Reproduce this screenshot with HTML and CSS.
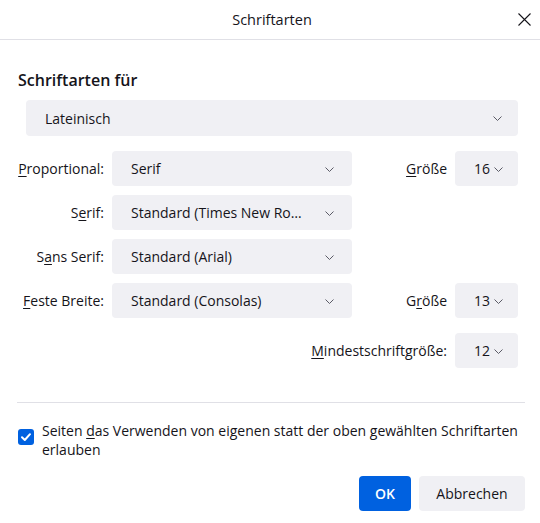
FILE: index.html
```html
<!DOCTYPE html>
<html lang="de">
<head>
<meta charset="utf-8">
<title>Schriftarten</title>
<link rel="stylesheet" href="styles.css">
</head>
<body>
<div class="dialog">
  <header class="titlebar">
    <span></span>
    <h1 class="title">Schriftarten</h1>
    <button class="close" aria-label="Schließen">
      <svg width="13" height="13" viewBox="0 0 13 13"><path d="M0.5 0.5 L12.5 12.5 M12.5 0.5 L0.5 12.5" stroke="#15141a" stroke-width="1.1" fill="none"/></svg>
    </button>
  </header>

  <main class="content">
    <h2 class="heading">Schriftarten für</h2>
    <div class="select select-wide">
      <span class="value">Lateinisch</span>
      <svg class="chev" width="9" height="5" viewBox="0 0 9 5"><path d="M0.5 0.5 L4.5 4.5 L8.5 0.5" stroke="#5b5b66" stroke-width="1" fill="none"/></svg>
    </div>

    <div class="fontgrid">
      <label class="lbl"><u>P</u>roportional:</label>
      <div class="select"><span class="value">Serif</span><svg class="chev" width="9" height="5" viewBox="0 0 9 5"><path d="M0.5 0.5 L4.5 4.5 L8.5 0.5" stroke="#5b5b66" stroke-width="1" fill="none"/></svg></div>
      <label class="lbl"><u>G</u>röße</label>
      <div class="select select-size"><span class="value">16</span><svg class="chev" width="9" height="5" viewBox="0 0 9 5"><path d="M0.5 0.5 L4.5 4.5 L8.5 0.5" stroke="#5b5b66" stroke-width="1" fill="none"/></svg></div>

      <label class="lbl">S<u>e</u>rif:</label>
      <div class="select"><span class="value">Standard (Times New Ro…</span><svg class="chev" width="9" height="5" viewBox="0 0 9 5"><path d="M0.5 0.5 L4.5 4.5 L8.5 0.5" stroke="#5b5b66" stroke-width="1" fill="none"/></svg></div>
      <span></span><span></span>

      <label class="lbl">S<u>a</u>ns Serif:</label>
      <div class="select"><span class="value">Standard (Arial)</span><svg class="chev" width="9" height="5" viewBox="0 0 9 5"><path d="M0.5 0.5 L4.5 4.5 L8.5 0.5" stroke="#5b5b66" stroke-width="1" fill="none"/></svg></div>
      <span></span><span></span>

      <label class="lbl"><u>F</u>este Breite:</label>
      <div class="select"><span class="value">Standard (Consolas)</span><svg class="chev" width="9" height="5" viewBox="0 0 9 5"><path d="M0.5 0.5 L4.5 4.5 L8.5 0.5" stroke="#5b5b66" stroke-width="1" fill="none"/></svg></div>
      <label class="lbl">G<u>r</u>öße</label>
      <div class="select select-size"><span class="value">13</span><svg class="chev" width="9" height="5" viewBox="0 0 9 5"><path d="M0.5 0.5 L4.5 4.5 L8.5 0.5" stroke="#5b5b66" stroke-width="1" fill="none"/></svg></div>
    </div>

    <div class="minrow">
      <label class="lbl"><u>M</u>indestschriftgröße:</label>
      <div class="select select-size"><span class="value">12</span><svg class="chev" width="9" height="5" viewBox="0 0 9 5"><path d="M0.5 0.5 L4.5 4.5 L8.5 0.5" stroke="#5b5b66" stroke-width="1" fill="none"/></svg></div>
    </div>
  </main>

  <footer class="footer">
    <hr class="sep">
    <div class="checkrow">
      <span class="checkbox"><svg width="16" height="16" viewBox="0 0 16 16"><path d="M4 8.3 L6.8 11 L12 5.2" stroke="#fff" stroke-width="2" fill="none" stroke-linecap="round" stroke-linejoin="round"/></svg></span>
      <span class="checktext">Seiten <u>d</u>as Verwenden von eigenen statt der oben gewählten Schriftarten erlauben</span>
    </div>
    <div class="buttons">
      <button class="btn btn-primary">OK</button>
      <button class="btn">Abbrechen</button>
    </div>
  </footer>
</div>
</body>
</html>
```

FILE: styles.css
```css
* { box-sizing: border-box; }

html, body {
  margin: 0;
  padding: 0;
  background: #ffffff;
}

body {
  font-family: "Open Sans", "Noto Sans", sans-serif;
  font-size: 14px;
  color: #15141a;
}

.dialog {
  width: 540px;
  height: 523px;
  display: flex;
  flex-direction: column;
}

.titlebar {
  height: 40px;
  border-bottom: 1px solid #e0e0e6;
  display: grid;
  grid-template-columns: 1fr auto 1fr;
  align-items: center;
}

.title {
  margin: 0;
  font-size: 14.5px;
  font-weight: 400;
  padding-left: 4px;
}

.close {
  justify-self: end;
  margin-right: 9px;
  width: 13px;
  height: 13px;
  padding: 0;
  border: 0;
  background: none;
  display: flex;
}

.content {
  padding: 28px 22px 0 18px;
}

.heading {
  margin: 0;
  font-size: 16px;
  font-weight: 600;
  line-height: 24px;
}

.select {
  height: 35px;
  background: #f0f0f4;
  border-radius: 4px;
  display: flex;
  align-items: center;
  justify-content: space-between;
  padding: 0 18px 0 19px;
  white-space: nowrap;
  overflow: hidden;
}

.select-wide {
  margin: 8px 0 0 8px;
  height: 36px;
  padding-right: 16px;
}

.select-size {
  padding: 0 15px 0 19px;
}

.chev {
  flex: none;
  margin-top: 1px;
}

.fontgrid {
  margin-top: 15px;
  display: grid;
  grid-template-columns: 86px 240px 1fr 63px;
  column-gap: 8px;
  row-gap: 9px;
  align-items: center;
}

.lbl {
  text-align: right;
  white-space: nowrap;
}

u {
  text-decoration-thickness: 1px;
  text-underline-offset: 2px;
}

.minrow {
  margin-top: 15px;
  display: flex;
  justify-content: flex-end;
  align-items: center;
  gap: 8px;
}

.minrow .select-size {
  width: 63px;
}

.footer {
  padding: 0 15px 0 17px;
}

.sep {
  margin: 34px 0 0 0;
  border: 0;
  border-top: 1px solid #e0e0e6;
  height: 0;
}

.checkrow {
  margin-top: 18px;
  display: flex;
  align-items: flex-start;
  gap: 8px;
  padding-left: 1px;
}

.checkbox {
  flex: none;
  width: 16px;
  height: 16px;
  margin-top: 8px;
  background: #0061e0;
  border-radius: 3px;
  display: flex;
}

.checktext {
  line-height: 19px;
}

.buttons {
  margin-top: 17px;
  display: flex;
  justify-content: flex-end;
  gap: 8px;
}

.btn {
  font-family: inherit;
  font-size: 14px;
  color: #15141a;
  height: 35px;
  border: 0;
  border-radius: 4px;
  background: #f0f0f4;
  padding: 0 16px;
  min-width: 52px;
  width: 106px;
}

.btn-primary {
  background: #0061e0;
  color: #ffffff;
  font-weight: 600;
  width: 52px;
}
```
